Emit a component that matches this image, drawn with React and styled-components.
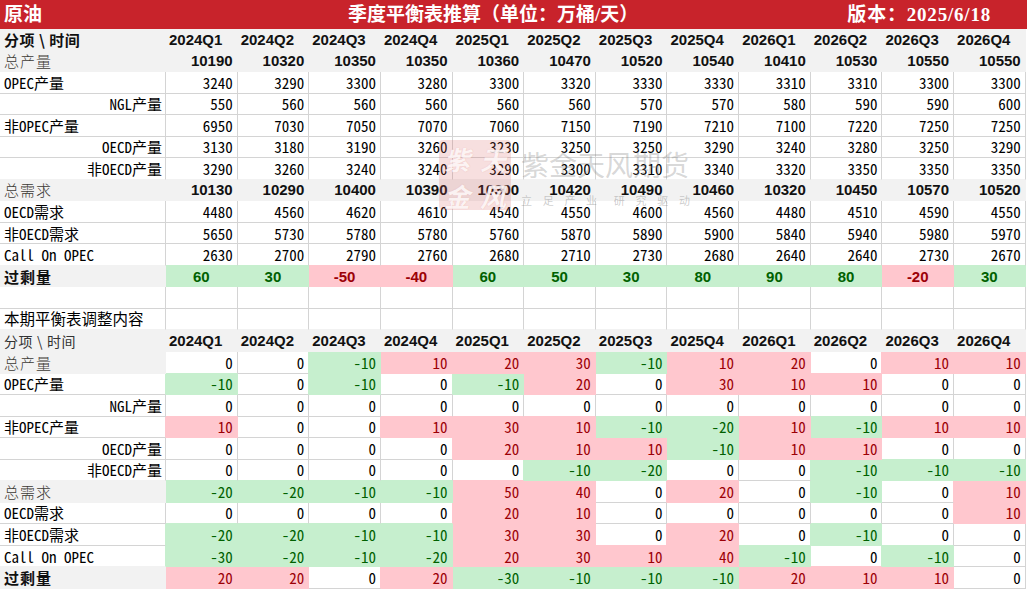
import React from 'react';
import styled, { createGlobalStyle } from 'styled-components';

const GlobalStyle = createGlobalStyle`
  html, body { margin: 0; padding: 0; background: #ffffff; }
  body { width: 1027px; height: 589px; overflow: hidden; }
`;

const MONO = `"Noto Sans Mono CJK SC", "DejaVu Sans Mono", "Noto Sans CJK SC", monospace`;
const BOLD = `"Liberation Sans", Arial, "Noto Sans CJK SC", sans-serif`;
const CJK = `"Noto Sans CJK SC", "Liberation Sans", sans-serif`;

const LINE = '#d4d4d4';
const GRAY = '#f2f2f2';
const GREEN = '#c6efce';
const RED = '#ffc7ce';

const Sheet = styled.div`
  position: relative;
  width: 1027px;
  height: 589px;
  overflow: hidden;
  background: #ffffff;
`;

const TitleBar = styled.div`
  height: 29px;
  background: #c8232b;
  color: #ffffff;
  display: flex;
  align-items: center;
  padding-left: 4px;
  font-family: "Liberation Serif", "Noto Sans CJK SC", serif;
  font-weight: 700;
  font-size: 19px;
  line-height: 1;
  white-space: nowrap;
`;

const TitleLeft = styled.span`
  flex: 0 0 344px;
`;

const TitleCenter = styled.span`
  flex: 1;
`;

const TitleRight = styled.span`
  padding-right: 36px;
  letter-spacing: 0.8px;
`;

const Grid = styled.div`
  display: grid;
  grid-template-columns: 166px repeat(12, 71.65px);
  grid-auto-rows: 21.54px;
`;

const Cell = styled.div`
  box-sizing: border-box;
  display: flex;
  align-items: center;
  justify-content: ${(p) => p.$justify};
  padding: 0 ${(p) => p.$pr}px 0 ${(p) => p.$pl}px;
  background: ${(p) => p.$bg};
  border-right: 1px solid ${(p) => p.$br};
  border-bottom: 1px solid ${(p) => p.$bb};
  white-space: nowrap;
  line-height: 1;
`;

const toneColor = (t) => (t === 'red' ? '#9c0006' : t === 'green' ? '#006100' : '#000000');

const MonoText = styled.span`
  font-family: ${MONO};
  font-size: 15px;
  color: ${(p) => toneColor(p.$tone)};
`;

const HeadLabel = styled.span`
  font-family: ${CJK};
  font-size: ${(p) => (p.$bold ? 15 : 14)}px;
  font-weight: ${(p) => (p.$bold ? 700 : 400)};
  color: ${(p) => (p.$bold ? '#111111' : '#333333')};
  letter-spacing: 0.5px;
`;

const Slash = styled.span`
  padding: 0 4px;
`;

const KaiLabel = styled.span`
  font-family: ${CJK};
  font-size: 15px;
  font-weight: 300;
  color: #3d3a35;
  letter-spacing: 1px;
`;

const StrongLabel = styled.span`
  font-family: ${CJK};
  font-size: 15px;
  font-weight: 700;
  color: #111111;
  letter-spacing: 1px;
`;

const SectionLabel = styled.span`
  font-family: ${CJK};
  font-size: 15.5px;
  color: #000000;
`;

const YearText = styled.span`
  font-family: ${BOLD};
  font-size: 15px;
  font-weight: 700;
  color: #111111;
`;

const TotalText = styled.span`
  font-family: ${BOLD};
  font-size: 15px;
  font-weight: 700;
  color: #111111;
`;

const SurplusText = styled.span`
  font-family: ${BOLD};
  font-size: 15px;
  font-weight: 700;
  color: ${(p) => toneColor(p.$tone)};
`;

const Watermark = styled.div`
  position: absolute;
  left: 439px;
  top: 140px;
  display: flex;
  gap: 10px;
  pointer-events: none;
`;

const Logo = styled.div`
  width: 72px;
  height: 70px;
  border-radius: 4px;
  background: rgba(214, 96, 96, 0.2);
  display: grid;
  grid-template-columns: 1fr 1fr;
  grid-template-rows: 1fr 1fr;
  place-items: center;
  font-family: ${CJK};
  font-size: 26px;
  font-weight: 700;
  font-style: italic;
  color: rgba(255, 255, 255, 0.85);
  text-shadow: 0 0 1px rgba(214, 96, 96, 0.35);
`;

const MarkText = styled.div`
  display: flex;
  flex-direction: column;
`;

const MarkTitle = styled.div`
  margin-top: 9px;
  font-family: ${CJK};
  font-size: 28px;
  line-height: 1.1;
  color: rgba(120, 120, 120, 0.3);
`;

const MarkSub = styled.div`
  margin-top: 15px;
  display: flex;
  gap: 6px;
  font-family: ${CJK};
  font-size: 11px;
  line-height: 1;
  letter-spacing: 10.7px;
  color: rgba(120, 120, 120, 0.38);
`;

const YEARS = ['2024Q1', '2024Q2', '2024Q3', '2024Q4', '2025Q1', '2025Q2', '2025Q3', '2025Q4', '2026Q1', '2026Q2', '2026Q3', '2026Q4'];

const UP = {
  total: [10190, 10320, 10350, 10350, 10360, 10470, 10520, 10540, 10410, 10530, 10550, 10550],
  opec: [3240, 3290, 3300, 3280, 3300, 3320, 3330, 3330, 3310, 3310, 3300, 3300],
  ngl: [550, 560, 560, 560, 560, 560, 570, 570, 580, 590, 590, 600],
  nonOpec: [6950, 7030, 7050, 7070, 7060, 7150, 7190, 7210, 7100, 7220, 7250, 7250],
  oecd: [3130, 3180, 3190, 3260, 3230, 3250, 3250, 3290, 3240, 3280, 3250, 3290],
  nonOecd: [3290, 3260, 3240, 3240, 3290, 3300, 3310, 3340, 3320, 3350, 3350, 3350],
  demand: [10130, 10290, 10400, 10390, 10300, 10420, 10490, 10460, 10320, 10450, 10570, 10520],
  oecdD: [4480, 4560, 4620, 4610, 4540, 4550, 4600, 4560, 4480, 4510, 4590, 4550],
  nonOecdD: [5650, 5730, 5780, 5780, 5760, 5870, 5890, 5900, 5840, 5940, 5980, 5970],
  call: [2630, 2700, 2790, 2760, 2680, 2710, 2730, 2680, 2640, 2640, 2730, 2670],
  surplus: [60, 30, -50, -40, 60, 50, 30, 80, 90, 80, -20, 30],
};

const DN = {
  total: [0, 0, -10, 10, 20, 30, -10, 10, 20, 0, 10, 10],
  opec: [-10, 0, -10, 0, -10, 20, 0, 30, 10, 10, 0, 0],
  ngl: [0, 0, 0, 0, 0, 0, 0, 0, 0, 0, 0, 0],
  nonOpec: [10, 0, 0, 10, 30, 10, -10, -20, 10, -10, 10, 10],
  oecd: [0, 0, 0, 0, 20, 10, 10, -10, 10, 10, 0, 0],
  nonOecd: [0, 0, 0, 0, 0, -10, -20, 0, 0, -10, -10, -10],
  demand: [-20, -20, -10, -10, 50, 40, 0, 20, 0, -10, 0, 10],
  oecdD: [0, 0, 0, 0, 20, 10, 0, 0, 0, 0, 0, 10],
  nonOecdD: [-20, -20, -10, -10, 30, 30, 0, 20, 0, -10, 0, 0],
  call: [-30, -20, -10, -20, 20, 30, 10, 40, -10, 0, -10, 0],
  surplus: [20, 20, 0, 20, -30, -10, -10, -10, 20, 10, 10, 0],
};

// adjustment table: increases red, decreases green
const deltaTone = (v) => (v > 0 ? 'red' : v < 0 ? 'green' : 'none');
// surplus table: surplus green, deficit red
const surplusTone = (v) => (v > 0 ? 'green' : v < 0 ? 'red' : 'none');
const fillOfTone = (t) => (t === 'red' ? RED : t === 'green' ? GREEN : null);

const label = (kind, text, align = 'left', fill = null) => ({ kind, text, align, fill });

const yearRow = (bold) => ({
  label: label(bold ? 'headBold' : 'head', '', 'left', GRAY),
  cells: YEARS.map((y) => ({ kind: 'year', text: y, align: 'left', fill: GRAY })),
});
const totalRow = (text, vals) => ({
  label: label('kai', text, 'left', GRAY),
  cells: vals.map((v) => ({ kind: 'total', text: v, align: 'right', fill: GRAY })),
});
const dataRow = (text, align, vals) => ({
  label: label('mono', text, align),
  cells: vals.map((v) => ({ kind: 'num', text: v, align: 'right', fill: null })),
});
const surplusRow = (vals) => ({
  label: label('strong', '过剩量', 'left', GRAY),
  cells: vals.map((v) => {
    const t = surplusTone(v);
    return { kind: 'surplus', text: v, tone: t, align: 'center', fill: fillOfTone(t) };
  }),
});
const emptyRow = (l) => ({
  label: l || label('empty', ''),
  cells: YEARS.map(() => ({ kind: 'empty', text: '', align: 'right', fill: null })),
});
const deltaRow = (lab, vals) => ({
  label: lab,
  cells: vals.map((v) => {
    const t = deltaTone(v);
    return { kind: 'num', text: v, tone: t, align: 'right', fill: fillOfTone(t) };
  }),
});

const ROWS = [
  yearRow(true),
  totalRow('总产量', UP.total),
  dataRow('OPEC产量', 'left', UP.opec),
  dataRow('NGL产量', 'right', UP.ngl),
  dataRow('非OPEC产量', 'left', UP.nonOpec),
  dataRow('OECD产量', 'right', UP.oecd),
  dataRow('非OECD产量', 'right', UP.nonOecd),
  totalRow('总需求', UP.demand),
  dataRow('OECD需求', 'left', UP.oecdD),
  dataRow('非OECD需求', 'left', UP.nonOecdD),
  dataRow('Call On OPEC', 'left', UP.call),
  surplusRow(UP.surplus),
  emptyRow(),
  emptyRow(label('section', '本期平衡表调整内容')),
  yearRow(false),
  deltaRow(label('kai', '总产量', 'left', GRAY), DN.total),
  deltaRow(label('mono', 'OPEC产量'), DN.opec),
  deltaRow(label('mono', 'NGL产量', 'right'), DN.ngl),
  deltaRow(label('mono', '非OPEC产量'), DN.nonOpec),
  deltaRow(label('mono', 'OECD产量', 'right'), DN.oecd),
  deltaRow(label('mono', '非OECD产量', 'right'), DN.nonOecd),
  deltaRow(label('kai', '总需求', 'left', GRAY), DN.demand),
  deltaRow(label('mono', 'OECD需求'), DN.oecdD),
  deltaRow(label('mono', '非OECD需求'), DN.nonOecdD),
  deltaRow(label('mono', 'Call On OPEC'), DN.call),
  deltaRow(label('strong', '过剩量', 'left', GRAY), DN.surplus),
];

const HeadText = () => (
  <>
    分项<Slash>\</Slash>时间
  </>
);

const renderContent = (c) => {
  switch (c.kind) {
    case 'headBold':
      return (
        <HeadLabel $bold>
          <HeadText />
        </HeadLabel>
      );
    case 'head':
      return (
        <HeadLabel>
          <HeadText />
        </HeadLabel>
      );
    case 'kai':
      return <KaiLabel>{c.text}</KaiLabel>;
    case 'strong':
      return <StrongLabel>{c.text}</StrongLabel>;
    case 'section':
      return <SectionLabel>{c.text}</SectionLabel>;
    case 'mono':
    case 'num':
      return <MonoText $tone={c.tone}>{c.text}</MonoText>;
    case 'year':
      return <YearText>{c.text}</YearText>;
    case 'total':
      return <TotalText>{c.text}</TotalText>;
    case 'surplus':
      return <SurplusText $tone={c.tone}>{c.text}</SurplusText>;
    default:
      return null;
  }
};

const justifyOf = (a) => (a === 'left' ? 'flex-start' : a === 'center' ? 'center' : 'flex-end');

export default function App() {
  const matrix = ROWS.map((r) => [r.label, ...r.cells]);
  const items = [];
  matrix.forEach((row, ri) => {
    row.forEach((c, ci) => {
      const right = row[ci + 1];
      const below = matrix[ri + 1] ? matrix[ri + 1][ci] : null;
      const br = c.fill || (right && right.fill) || LINE;
      const bb = c.fill || (below && below.fill) || LINE;
      const isLabel = ci === 0;
      const pl = c.kind === 'year' ? 3 : 4;
      const pr = isLabel ? 3 : 4;
      items.push(
        <Cell
          key={`${ri}-${ci}`}
          $bg={c.fill || '#ffffff'}
          $br={br}
          $bb={bb}
          $justify={justifyOf(c.align)}
          $pl={pl}
          $pr={pr}
        >
          {renderContent(c)}
        </Cell>
      );
    });
  });

  return (
    <>
      <GlobalStyle />
      <Sheet>
        <TitleBar>
          <TitleLeft>原油</TitleLeft>
          <TitleCenter>季度平衡表推算（单位：万桶/天）</TitleCenter>
          <TitleRight>版本：2025/6/18</TitleRight>
        </TitleBar>
        <Grid>{items}</Grid>
        <Watermark>
          <Logo>
            <span>紫</span>
            <span>天</span>
            <span>金</span>
            <span>风</span>
          </Logo>
          <MarkText>
            <MarkTitle>紫金天风期货</MarkTitle>
            <MarkSub>
              <span>立足产业</span>
              <span>研究驱动</span>
            </MarkSub>
          </MarkText>
        </Watermark>
      </Sheet>
    </>
  );
}
